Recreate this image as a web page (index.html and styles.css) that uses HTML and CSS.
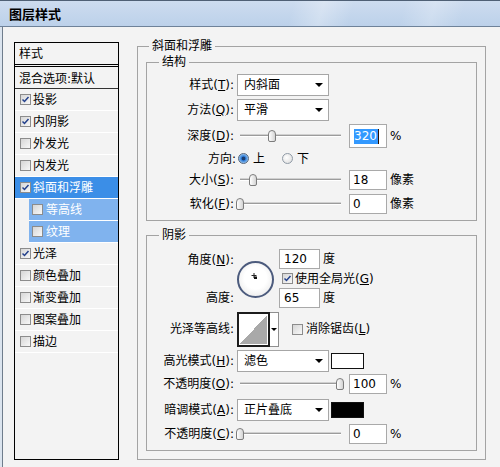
FILE: index.html
```html
<!DOCTYPE html>
<html>
<head>
<meta charset="utf-8">
<link rel="stylesheet" href="styles.css">
</head>
<body>
<div class="window">
  <div class="titlebar"><span class="title">图层样式</span></div>
  <div class="content">
    <div class="stylelist">
      <div class="list-head">样式</div>
      <div class="list-blend">混合选项:默认</div>
      <div class="item"><span class="cb on"><svg viewBox="0 0 9 9"><path d="M1.5 4.5 L3.5 6.5 L7.5 2"/></svg></span>投影</div>
      <div class="item"><span class="cb on"><svg viewBox="0 0 9 9"><path d="M1.5 4.5 L3.5 6.5 L7.5 2"/></svg></span>内阴影</div>
      <div class="item"><span class="cb"></span>外发光</div>
      <div class="item"><span class="cb"></span>内发光</div>
      <div class="item sel"><span class="cb on"><svg viewBox="0 0 9 9"><path d="M1.5 4.5 L3.5 6.5 L7.5 2"/></svg></span>斜面和浮雕</div>
      <div class="item sub"><span class="cb"></span>等高线</div>
      <div class="item sub"><span class="cb"></span>纹理</div>
      <div class="item"><span class="cb on"><svg viewBox="0 0 9 9"><path d="M1.5 4.5 L3.5 6.5 L7.5 2"/></svg></span>光泽</div>
      <div class="item"><span class="cb"></span>颜色叠加</div>
      <div class="item"><span class="cb"></span>渐变叠加</div>
      <div class="item"><span class="cb"></span>图案叠加</div>
      <div class="item"><span class="cb"></span>描边</div>
    </div>

    <fieldset class="grp outer">
      <legend>斜面和浮雕</legend>

      <fieldset class="grp inner struct">
        <legend>结构</legend>
        <div class="row h24">
          <span class="lbl">样式(<u>T</u>):</span>
          <div class="select"><span>内斜面</span><i class="arrow"></i></div>
        </div>
        <div class="row h26">
          <span class="lbl">方法(<u>Q</u>):</span>
          <div class="select"><span>平滑</span><i class="arrow"></i></div>
        </div>
        <div class="row h26">
          <span class="lbl">深度(<u>D</u>):</span>
          <div class="slider"><span class="thumb" style="left:31px"></span></div>
          <div class="num tall"><span class="hl">320</span><span class="caret"></span></div>
          <span class="unit">%</span>
        </div>
        <div class="row h19">
          <span class="lbl dir">方向:</span>
          <span class="radio on"></span><span class="rtext">上</span>
          <span class="radio gap"></span><span class="rtext">下</span>
        </div>
        <div class="row h24">
          <span class="lbl">大小(<u>S</u>):</span>
          <div class="slider"><span class="thumb" style="left:12px"></span></div>
          <div class="num">18</div>
          <span class="unit">像素</span>
        </div>
        <div class="row h24">
          <span class="lbl">软化(<u>F</u>):</span>
          <div class="slider"><span class="thumb" style="left:-1px"></span></div>
          <div class="num">0</div>
          <span class="unit">像素</span>
        </div>
      </fieldset>

      <fieldset class="grp inner shade">
        <legend>阴影</legend>
        <div class="angle">
          <div class="lblcol">
            <span class="l20">角度(<u>N</u>):</span>
            <span class="l19"></span>
            <span class="l20">高度:</span>
          </div>
          <div class="dial">
            <svg viewBox="0 0 33 33" width="33" height="33">
              <path d="M12.5 12.5 H17.5 M15 10 V15" stroke="#222" stroke-width="1" fill="none"/>
              <rect x="15" y="13.5" width="3" height="2.5" fill="#111"/>
            </svg>
          </div>
          <div class="rcol">
            <div class="r20"><div class="num ang">120</div><span class="unit">度</span></div>
            <div class="r19"><span class="cb on"><svg viewBox="0 0 9 9"><path d="M1.5 4.5 L3.5 6.5 L7.5 2"/></svg></span><span class="cbt">使用全局光(<u>G</u>)</span></div>
            <div class="r20"><div class="num ang">65</div><span class="unit">度</span></div>
          </div>
        </div>
        <div class="row h42">
          <span class="lbl">光泽等高线:</span>
          <div class="contour"><div class="cbox"></div><div class="carr"><i class="arrow small"></i></div></div>
          <span class="cb aa"></span><span class="cbt">消除锯齿(<u>L</u>)</span>
        </div>
        <div class="row h22">
          <span class="lbl">高光模式(<u>H</u>):</span>
          <div class="select"><span>滤色</span><i class="arrow"></i></div>
          <span class="swatch white"></span>
        </div>
        <div class="row h24">
          <span class="lbl">不透明度(<u>O</u>):</span>
          <div class="slider"><span class="thumb" style="left:99px"></span></div>
          <div class="num">100</div>
          <span class="unit">%</span>
        </div>
        <div class="row h28">
          <span class="lbl">暗调模式(<u>A</u>):</span>
          <div class="select"><span>正片叠底</span><i class="arrow"></i></div>
          <span class="swatch black"></span>
        </div>
        <div class="row h20">
          <span class="lbl">不透明度(<u>C</u>):</span>
          <div class="slider"><span class="thumb" style="left:-1px"></span></div>
          <div class="num">0</div>
          <span class="unit">%</span>
        </div>
      </fieldset>
    </fieldset>
  </div>
</div>
</body>
</html>
```

FILE: styles.css
```css
* { box-sizing: border-box; }

html, body {
  margin: 0;
  padding: 0;
}

body {
  width: 500px;
  height: 467px;
  overflow: hidden;
  background: #f3f3f3;
  font-family: "DejaVu Sans", "Noto Sans CJK SC", sans-serif;
  font-size: 12px;
  line-height: 14px;
  color: #000;
}

u { text-decoration: underline; text-underline-offset: 1px; }

.window {
  width: 500px;
  height: 467px;
  display: flex;
  flex-direction: column;
}

.titlebar {
  height: 27px;
  flex: none;
  display: flex;
  align-items: center;
  padding-left: 9px;
  border-top: 1px solid #4f6075;
  border-bottom: 1px solid #6e8299;
  background:
    linear-gradient(105deg, rgba(255,255,255,0) 58%, rgba(255,255,255,0.28) 64%, rgba(255,255,255,0) 70%, rgba(255,255,255,0) 80%, rgba(255,255,255,0.22) 86%, rgba(255,255,255,0) 92%),
    linear-gradient(#cddcef, #bcd1ea);
}

.title {
  font-family: "Noto Sans CJK SC", sans-serif;
  font-weight: bold;
  font-size: 13px;
  line-height: 16px;
}

.content {
  flex: 1;
  display: flex;
  align-items: flex-start;
  padding-left: 3px;
  box-shadow: inset 2px 0 0 #dbe4ee, inset 3px 0 0 #6f7d8c;
}

/* ---------- left style list ---------- */
.stylelist {
  margin-left: 11px;
  margin-top: 15px;
  width: 105px;
  height: 418px;
  border: 1px solid #000;
  flex: none;
}

.list-head {
  height: 22px;
  border-bottom: 1px solid #000;
  padding-left: 4px;
  display: flex;
  align-items: center;
}

.list-blend {
  margin-top: 1px;
  height: 23px;
  border-top: 1px solid #000;
  border-bottom: 1px solid #333;
  padding-left: 4px;
  padding-top: 2px;
  display: flex;
  align-items: center;
  white-space: nowrap;
}

.item {
  height: 22px;
  border-bottom: 1px solid #fff;
  display: flex;
  align-items: center;
  padding-left: 5px;
  white-space: nowrap;
}

.item .cb { margin-right: 2px; }

.item.sel {
  background: #3b8ee7;
  color: #fff;
}

.item.sub {
  margin-left: 14px;
  padding-left: 3px;
  background: #80b3ee;
  color: #fff;
}

.item.sub .cb { margin-right: 3px; }

/* ---------- checkbox ---------- */
.cb {
  display: inline-flex;
  align-items: center;
  justify-content: center;
  width: 11px;
  height: 11px;
  flex: none;
  border: 1px solid #8c8c8c;
  background: linear-gradient(135deg, #d6d6d6, #f8f8f8);
}

.cb svg {
  width: 9px;
  height: 9px;
  fill: none;
  stroke: #23408c;
  stroke-width: 1.5;
}

/* ---------- group boxes ---------- */
fieldset.grp {
  border: 1px solid #a3a3a3;
  min-width: 0;
}

fieldset.grp > legend {
  padding: 0 3px;
  line-height: 14px;
  height: 14px;
}

fieldset.outer {
  margin: 12px 0 0 18px;
  width: 349px;
  height: 421px;
  padding: 2px 8px 8px 8px;
}

fieldset.outer > legend { margin-left: 3px; }

fieldset.inner > legend { margin-left: 12px; }

fieldset.struct {
  margin: 0;
  padding: 4px 0 4px 0;
}

fieldset.shade {
  margin: 7px 0 0 0;
  padding: 7px 0 6px 0;
}

/* ---------- rows ---------- */
.row {
  display: flex;
  align-items: center;
  white-space: nowrap;
}

.h19 { height: 19px; }
.h20 { height: 20px; }
.h22 { height: 22px; }
.h24 { height: 24px; }
.h26 { height: 26px; }
.h28 { height: 28px; }
.h42 { height: 42px; }

.lbl {
  width: 87px;
  margin-right: 3px;
  text-align: right;
  flex: none;
}

.lbl.dir {
  width: 89px;
  margin-right: 2px;
}

/* dropdown */
.select {
  width: 92px;
  height: 22px;
  flex: none;
  border: 1px solid #a6a6a6;
  background: #fff;
  display: flex;
  align-items: center;
  justify-content: space-between;
  padding: 0 5px 0 6px;
}

.arrow {
  width: 0;
  height: 0;
  border-left: 4px solid transparent;
  border-right: 4px solid transparent;
  border-top: 4px solid #000;
}

.arrow.small {
  border-left-width: 3px;
  border-right-width: 3px;
  border-top-width: 3px;
}

/* slider */
.slider {
  position: relative;
  width: 105px;
  height: 14px;
  flex: none;
  background:
    linear-gradient(#9c9c9c, #9c9c9c) 3px 6px / 101px 1px no-repeat,
    linear-gradient(#ffffff, #ffffff) 3px 7px / 101px 1px no-repeat,
    linear-gradient(#d0d0d0, #d0d0d0) 3px 5px / 101px 1px no-repeat;
}

.thumb {
  position: absolute;
  top: 1px;
  width: 8px;
  height: 12px;
  border: 1px solid #7c7c7c;
  border-radius: 4px 4px 2px 2px;
  background: linear-gradient(to right, #ffffff, #d4d4d4);
}

/* number boxes */
.num {
  width: 38px;
  height: 20px;
  flex: none;
  margin-left: 7px;
  border: 1px solid #a9a9a9;
  background: #fff;
  display: flex;
  align-items: center;
  padding-left: 3px;
  font-size: 12px;
}

.num.tall { height: 24px; padding-left: 4px; }

.num.ang { width: 41px; margin-left: 0; padding-left: 4px; }

.hl {
  background: #3399ff;
  color: #fff;
  line-height: 15px;
  padding: 0 1px 0 0;
}

.caret {
  display: inline-block;
  width: 1px;
  height: 15px;
  background: #2a1000;
}

.unit {
  margin-left: 3px;
}

/* radios */
.radio {
  width: 11px;
  height: 11px;
  flex: none;
  border-radius: 50%;
  border: 1px solid #8f9aa6;
  background: radial-gradient(circle at 40% 40%, #ffffff, #d9d9d9);
}

.radio.on {
  border-color: #56657a;
  background: radial-gradient(circle, #1c3d6e 0 1.5px, #2f7bd6 2.2px, #8fc0f0 4.5px, #e8f2fc 6px);
}

.radio.gap { margin-left: 17px; }

.rtext { margin-left: 4px; }

/* angle block */
.angle {
  display: flex;
  align-items: center;
  height: 59px;
}

.lblcol {
  width: 87px;
  margin-right: 3px;
  display: flex;
  flex-direction: column;
  text-align: right;
  flex: none;
}

.l20 { height: 20px; line-height: 20px; }
.l19 { height: 18px; }

.dial {
  width: 37px;
  height: 37px;
  flex: none;
  margin-top: 2px;
  border: 2px solid #4c5b7d;
  border-radius: 50%;
  background: radial-gradient(circle at 50% 45%, #ffffff 45%, #e2e2e2 100%);
}

.dial svg { display: block; }

.rcol {
  margin-left: 5px;
  display: flex;
  flex-direction: column;
}

.r20 { height: 20px; display: flex; align-items: center; }
.r19 { height: 19px; display: flex; align-items: center; padding-left: 3px; }

.cbt { margin-left: 2px; }

/* contour */
.contour {
  display: flex;
  flex: none;
  height: 35px;
}

.cbox {
  width: 33px;
  height: 35px;
  border: 2px solid #1c1c1c;
  background: linear-gradient(to top left, #a9a9a9 50%, #ffffff 50%);
  box-shadow: inset 0 0 0 1px #fff;
}

.carr {
  width: 9px;
  height: 35px;
  border: 1px solid #8f8f8f;
  border-left: none;
  background: #fff;
  display: flex;
  align-items: center;
  justify-content: center;
}

.cb.aa { margin-left: 13px; }
.cb.aa + .cbt { margin-left: 3px; }

/* colour swatches */
.swatch {
  width: 33px;
  height: 16px;
  flex: none;
  margin-left: 2px;
  border: 1px solid #111;
}

.swatch.white { background: #fff; }
.swatch.black { background: #000; }
```
